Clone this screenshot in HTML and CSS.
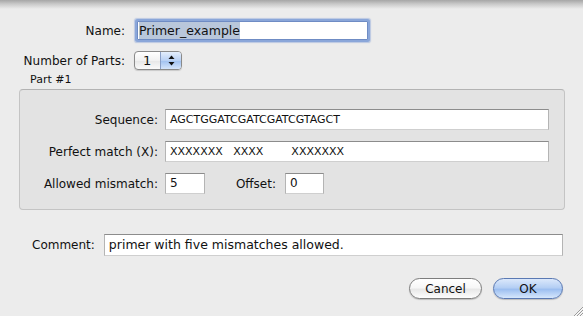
FILE: index.html
```html
<!DOCTYPE html>
<html>
<head>
  <title>Primer</title>
  <link rel="stylesheet" href="styles.css">
</head>
<body>
  <div class="dialog">
    <div class="top-form">
      <label class="label">Name:</label>
      <div class="field name-field focused"><span class="selected">Primer_example</span></div>
      <label class="label">Number of Parts:</label>
      <div class="stepper">
        <span class="stepper-value">1</span>
        <span class="stepper-arrows">
          <svg width="7" height="11" viewBox="0 0 7 11">
            <path d="M3.5 0.5 L6.5 4 L0.5 4 Z" fill="#111"/>
            <path d="M0.5 7 L6.5 7 L3.5 10.5 Z" fill="#111"/>
          </svg>
        </span>
      </div>
    </div>

    <div class="part-title">Part #1</div>
    <div class="group">
      <label class="label">Sequence:</label>
      <div class="field seq">AGCTGGATCGATCGATCGTAGCT</div>
      <label class="label">Perfect match (X):</label>
      <div class="field seq">XXXXXXX   XXXX        XXXXXXX</div>
      <label class="label">Allowed mismatch:</label>
      <div class="inline-row">
        <div class="field small">5</div>
        <label class="label offset-label">Offset:</label>
        <div class="field small">0</div>
      </div>
    </div>

    <div class="comment-row">
      <label class="label">Comment:</label>
      <div class="field comment">primer with five mismatches allowed.</div>
    </div>

    <div class="buttons">
      <button class="btn">Cancel</button>
      <button class="btn btn-default">OK</button>
    </div>
  </div>
  <svg class="grip" width="11" height="11" viewBox="0 0 11 11">
    <path d="M11 2 L2 11 M11 5 L5 11 M11 8 L8 11" stroke="#9a9a9a" stroke-width="1"/>
    <path d="M11 3 L3 11 M11 6 L6 11 M11 9 L9 11" stroke="#fafafa" stroke-width="1"/>
  </svg>
</body>
</html>
```

FILE: styles.css
```css
:root {
  --window-bg: #ececec;
  --group-bg: #e3e3e3;
  --field-border: #a5a5a5;
  --focus-ring: #8aa6d9;
  --select-bg: #b9c7db;
}

html, body {
  margin: 0;
}

body {
  font-family: 'DejaVu Sans', sans-serif;
  font-size: 12px;
  color: #111;
  background: linear-gradient(#a6a6a6 0, #c9c9c9 4px, #ececec 9px, #ececec 100%);
  width: 583px;
  height: 316px;
  overflow: hidden;
  position: relative;
}

.dialog {
  display: flex;
  flex-direction: column;
}

.label {
  text-align: right;
  white-space: nowrap;
}

.field {
  box-sizing: border-box;
  height: 22px;
  background: #fff;
  border: 1px solid #b4b4b4;
  border-top-color: #8c8c8c;
  border-bottom-color: #cfcfcf;
  padding: 0 4px;
  line-height: 20px;
  white-space: pre;
  overflow: hidden;
}

/* top rows */
.top-form {
  display: grid;
  grid-template-columns: 105px 1fr;
  column-gap: 9px;
  row-gap: 11px;
  align-items: center;
  padding: 21px 0 0 20px;
}

.name-field {
  width: 231px;
  height: 19px;
  margin-left: 3px;
  line-height: 17px;
  padding: 0 1px;
  font-size: 12.5px;
}

.focused {
  border: 1px solid #6f8cc4;
  border-radius: 1px;
  box-shadow: 0 0 0 2px var(--focus-ring), 0 0 1px 3px rgba(138,166,217,0.5);
}

.selected {
  background: var(--select-bg);
  display: inline-block;
  line-height: 17px;
}

.stepper {
  display: flex;
  width: 48px;
  height: 19px;
  box-sizing: border-box;
  border: 1px solid #8a8a8a;
  border-radius: 4px;
  overflow: hidden;
  background: linear-gradient(#ffffff, #f1f1f1 50%, #e6e6e6 51%, #fafafa);
  box-shadow: 0 1px 1px rgba(0,0,0,0.15);
}

.stepper-value {
  flex: 1;
  padding-left: 8px;
  line-height: 17px;
  font-size: 13px;
}

.stepper-arrows {
  width: 20px;
  border-left: 1px solid #8a9fc6;
  display: flex;
  align-items: center;
  justify-content: center;
  background: linear-gradient(#e4eefc, #b9d1f4 50%, #9fc0f0 51%, #d5e5fb);
}

/* part group */
.part-title {
  font-size: 11px;
  line-height: 13px;
  margin: 3px 0 3px 30px;
}

.group {
  margin-left: 19px;
  width: 546px;
  height: 121px;
  box-sizing: border-box;
  background: var(--group-bg);
  border: 1px solid #c4c4c4;
  border-top-color: #b3b3b3;
  border-radius: 4px;
  display: grid;
  grid-template-columns: 138px 384px;
  grid-auto-rows: 21px;
  column-gap: 7px;
  row-gap: 11px;
  align-items: center;
  padding: 19px 0 0 0;
}

.group .field {
  height: 21px;
  line-height: 19px;
}

.seq {
  font-size: 11px;
}

.inline-row {
  display: flex;
  align-items: center;
}

.field.small {
  width: 40px;
}

.inline-row .field.small:last-child {
  width: 39px;
}

.offset-label {
  width: 42px;
  margin: 0 9px 0 29px;
}

/* comment */
.comment-row {
  display: flex;
  align-items: center;
  gap: 9px;
  padding: 24px 20px 0 32px;
}

.comment {
  flex: 1;
  font-size: 12.5px;
  height: 22px;
}

/* buttons */
.buttons {
  display: flex;
  justify-content: flex-end;
  gap: 11px;
  padding: 22px 20px 0 0;
}

.btn {
  font-family: 'DejaVu Sans', sans-serif;
  font-size: 12px;
  color: #111;
  height: 21px;
  width: 73px;
  padding: 0;
  border: 1px solid #7d7d7d;
  border-radius: 11px;
  background: linear-gradient(#ffffff, #f7f7f7 45%, #e8e8e8 55%, #fdfdfd);
  box-shadow: 0 1px 1px rgba(0,0,0,0.2);
}

.btn-default {
  width: 70px;
  border-color: #5a79b3;
  background: linear-gradient(#dbe8fb, #b5cff4 45%, #9dbff0 55%, #d6e7fc);
}

.grip {
  position: absolute;
  right: 0;
  bottom: 0;
}
```
